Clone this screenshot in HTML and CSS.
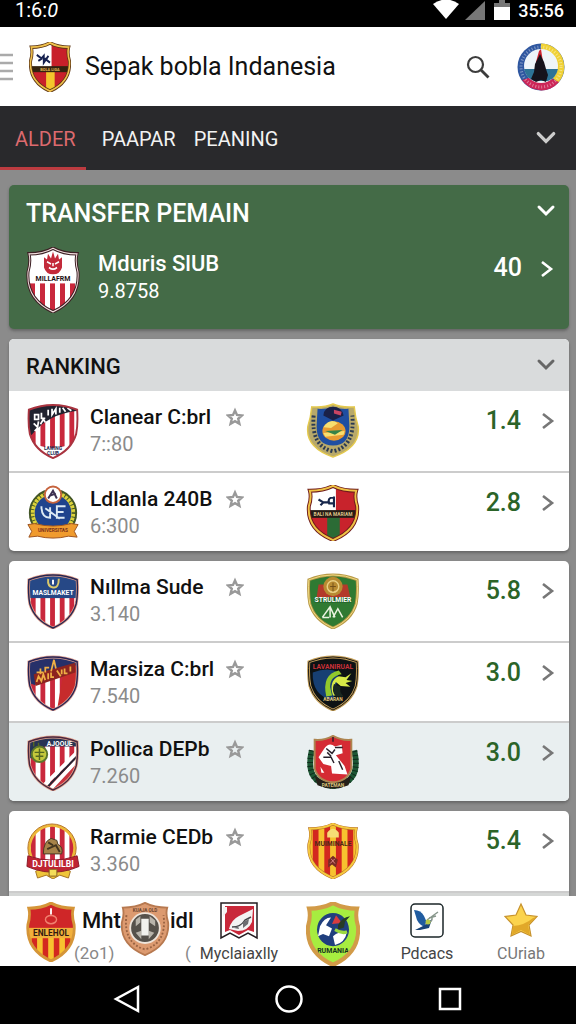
FILE: index.html
```html
<!DOCTYPE html>
<html lang="id">
<head>
    <meta charset="UTF-8">
    <meta name="viewport" content="width=device-width, initial-scale=1.0">
    <title>Sepak bobla Indanesia</title>
    <link rel="stylesheet" href="styles.css">
</head>
<body>

<!-- shapes shared by the crests -->
<svg class="defs" width="0" height="0" aria-hidden="true">
    <defs>
        <path id="shield" d="M3 6Q17 6 27 1Q37 6 51 6Q49 13 52 22Q54 46 27 57Q0 46 2 22Q5 13 3 6Z"/>
        <path id="badge" d="M2 7Q14 2 27 2Q40 2 52 7Q53 22 51 32Q46 49 27 57Q8 49 3 32Q1 22 2 7Z"/>
        <clipPath id="shield-clip"><use href="#shield"/></clipPath>
        <clipPath id="badge-clip"><use href="#badge"/></clipPath>
        <pattern id="red-stripes" width="10" height="60" patternUnits="userSpaceOnUse">
            <rect width="10" height="60" fill="#fff"/>
            <rect x="4" width="5" height="60" fill="#c9283c"/>
        </pattern>
        <pattern id="gold-stripes" width="12" height="60" patternUnits="userSpaceOnUse">
            <rect width="12" height="60" fill="#f7c22f"/>
            <rect x="6" width="6" height="60" fill="#d3281f"/>
        </pattern>
        <symbol id="down" viewBox="0 0 20 14"><path d="M3 3l7 7 7-7" fill="none" stroke="currentColor" stroke-width="3" stroke-linecap="round"/></symbol>
        <symbol id="next" viewBox="0 0 14 20"><path d="M2 3l9 7-9 7" fill="none" stroke="currentColor" stroke-width="2.6"/></symbol>
        <symbol id="star" viewBox="0 0 18 18"><path d="M9 2.500l2 4.500 5 .5-3.800 3.300 1.200 5L9 13.200 4.600 15.800l1.200-5L2 7.500l5-.5z" fill="none" stroke="currentColor" stroke-width="2.4"/></symbol>
    </defs>
</svg>

<div class="status-bar">
    <span class="status-left">1:6:<i>0</i></span>
    <svg width="28" height="20" viewBox="0 0 28 20"><path d="M1 4Q14-5 27 4L14 19Z" fill="#fff"/></svg>
    <svg width="22" height="20" viewBox="0 0 22 20"><path d="M1 20L21 1V20Z" fill="#777"/></svg>
    <svg width="16" height="20" viewBox="0 0 16 20"><path d="M5 0h6v3h5v5H0V3h5z" fill="#777"/><path d="M0 7h16v13H0z" fill="#fff"/></svg>
    <span class="clock">35:56</span>
</div>

<header class="top-bar">
    <button class="menu" aria-label="Menu">
        <svg width="13" height="30" viewBox="0 0 13 30"><path d="M0 3h13M0 11h13M0 19h13M0 27h13" stroke="#aaa" stroke-width="2.5"/></svg>
    </button>
    <svg class="logo" width="42" height="50" viewBox="0 0 54 58" preserveAspectRatio="none" role="img" aria-label="Klub">
        <g clip-path="url(#shield-clip)">
            <rect width="54" height="58" fill="#c8202a"/>
            <rect width="29" height="31" fill="#fff"/>
            <rect x="22" y="34" width="11" height="24" fill="#f4c62c"/>
            <rect y="28" width="54" height="7" fill="#34230f"/>
        </g>
        <path d="M10 15l6 4 3-3v8l6-8M20 19l7 5M12 22l5-3" fill="none" stroke="#16204e" stroke-width="2.4"/>
        <text x="27" y="34" class="crest-text" fill="#e5bd55">BOLA LIGA</text>
        <use href="#shield" fill="none" stroke="#5d3513" stroke-width="4"/>
        <use href="#shield" fill="none" stroke="#f0c24d" stroke-width="2"/>
    </svg>
    <h1>Sepak bobla Indanesia</h1>
    <button class="search" aria-label="Cari">
        <svg width="24" height="24" viewBox="0 0 24 24" fill="none" stroke="#3c3c3c"><circle cx="9.5" cy="9.5" r="7.5" stroke-width="2.2"/><path d="M14.500 14.500l8 8" stroke-width="2.8"/></svg>
    </button>
    <a class="profile" href="#profil" aria-label="Profil">
        <svg width="48" height="50" viewBox="0 0 48 50">
            <circle cx="24" cy="25" r="23.5" fill="#2f57a0"/>
            <path d="M24 1.500A23.500 23.500 0 0 1 41 41L24 25Z" fill="#f0d134"/>
            <path d="M5 38Q24 30 42 40A23 23 0 0 1 5 38Z" fill="#cc2658"/>
            <circle cx="24" cy="25" r="20" fill="none" stroke="#fff" stroke-width="3" stroke-dasharray="1 2" opacity=".4"/>
            <circle cx="24" cy="24" r="17" fill="#eef5f9"/>
            <path d="M7 27h34Q39 36 31 39H17Q9 36 7 27Z" fill="#2d7396"/>
            <path d="M19 20l3-11 2-2 2 13z" fill="#cf2430"/>
            <path d="M18 22l5-10 4 8 2 7 2 6-2 7-5-2-5 2-5-3 3-7z" fill="#15131c"/>
        </svg>
    </a>
</header>

<nav class="tabs">
    <a class="tab active" href="#alder">ALDER</a>
    <a class="tab" href="#paapar">PAAPAR</a>
    <a class="tab" href="#peaning">PEANING</a>
    <button class="more" aria-label="Lainnya"><svg width="22" height="16"><use href="#down"/></svg></button>
</nav>

<main>
    <section class="card transfer">
        <div class="card-head">
            <h2>TRANSFER PEMAIN</h2>
            <button aria-label="Tutup transfer"><svg width="20" height="14"><use href="#down"/></svg></button>
        </div>
        <div class="transfer-row">
            <svg width="54" height="66" viewBox="0 0 54 58" preserveAspectRatio="none">
                <use href="#shield" fill="#fff"/>
                <g clip-path="url(#shield-clip)"><rect y="32" width="54" height="26" fill="url(#red-stripes)"/></g>
                <path d="M18 9l3 2 1-5 3 4 2-6 2 6 3-4 1 5 3-2v9q-2 6-9 6t-9-6z" fill="#c32a3a"/>
                <path d="M21 13l4 2M33 13l-4 2M23 18q4 3 8 0M27 14v3" stroke="#fff" stroke-width="1.5" fill="none"/>
                <text x="27" y="30" class="crest-text big" fill="#1d1216">MILLAFRM</text>
                <use href="#shield" fill="none" stroke="#3c2024" stroke-width="3"/>
                <use href="#shield" fill="none" stroke="#f3dede" stroke-width="1"/>
            </svg>
            <div class="team">
                <h3>Mduris SlUB</h3>
                <p>9.8758</p>
            </div>
            <span class="value">40</span>
            <a class="next" href="#transfer" aria-label="Detail"><svg width="14" height="20"><use href="#next"/></svg></a>
        </div>
    </section>

    <section class="card">
        <div class="card-head ranking-head">
            <h2>RANKING</h2>
            <button aria-label="Tutup ranking"><svg width="20" height="14"><use href="#down"/></svg></button>
        </div>
        <ul>
            <li class="row">
                <svg class="crest" viewBox="0 0 54 58">
                    <g clip-path="url(#badge-clip)">
                        <rect width="54" height="58" fill="url(#red-stripes)"/>
                        <path d="M0 0h54v8Q22 11 5 33L0 36z" fill="#20222f"/>
                        <path d="M12 44q15 5 30 0l2 14H10z" fill="#fff"/>
                    </g>
                    <path d="M8 12h4v5H8zM15 10v6h4M22 7v6M26 6v6l4-6v6M34 5v5M37 5l3 4M42 5l4 3M7 21l4 4 1-6M14 22l3-5 2 3M8 29l3-3" fill="none" stroke="#fff" stroke-width="1.8"/>
                    <text x="27" y="49" class="crest-text" fill="#20284e">LAWING</text>
                    <text x="27" y="54" class="crest-text" fill="#20284e">CLUB</text>
                    <use href="#badge" fill="none" stroke="#a93440" stroke-width="2"/>
                </svg>
                <div class="team"><h3>Clanear C:brl</h3><p>7::80</p></div>
                <button class="star" aria-label="Favorit"><svg width="18" height="20"><use href="#star"/></svg></button>
                <svg class="crest rival" viewBox="0 0 54 58">
                    <path d="M5 4Q18 5 27 1Q36 5 49 4Q50 15 53 24Q56 46 27 56Q-2 46 1 24Q4 15 5 4Z" fill="#b8a96a" stroke="#e4c94d" stroke-width="1.5"/>
                    <path d="M7 13Q4 45 27 50Q50 45 47 13" fill="none" stroke="#2a3a53" stroke-width="4" stroke-dasharray="2 2"/>
                    <path d="M11 6Q18 7 27 4Q36 7 43 6L44 24Q44 44 27 44Q10 44 10 24Z" fill="#1f4ea1"/>
                    <path d="M17 13q1-9 10-9t11 9l-11 5z" fill="#1a2148"/><path d="M28 7l8 2-1 4-7-2z" fill="#ca4563"/>
                    <ellipse cx="28" cy="29" rx="12" ry="10" fill="#e79b32"/>
                    <path d="M17 25q7-10 15-4l-7 5zM17 31l22-2-1 4-19 2z" fill="#f7df70"/><path d="M19 29l18-1-8 5z" fill="#358348"/>
                </svg>
                <span class="value">1.4</span>
                <a class="next" href="#klub1" aria-label="Detail"><svg width="14" height="20"><use href="#next"/></svg></a>
            </li>
            <li class="row">
                <svg class="crest" viewBox="0 0 54 58">
                    <circle cx="27" cy="29" r="24" fill="#ddd33c" stroke="#435627" stroke-width="2"/>
                    <circle cx="27" cy="29" r="22" fill="none" stroke="#435627" stroke-width="5" stroke-dasharray="1 3"/>
                    <circle cx="27" cy="29" r="19" fill="#1f438d"/>
                    <circle cx="27" cy="10" r="8.5" fill="#fff" stroke="#c6633d" stroke-width="2"/>
                    <path d="M22 14l5-8 4 8M24 11l6-2" stroke="#3d3051" stroke-width="2" fill="none"/>
                    <path d="M15 22q0 12 9 12V23M30 22h10M31 28h7M31 23v11h8M19 24l15 11" stroke="#dce9f4" stroke-width="2" fill="none"/>
                    <path d="M1 41l7-1q19 5 38 0l7 1-4 7 3 6-9-1q-16 4-32 0l-9 1 3-6z" fill="#f09b2e" stroke="#9d5422"/>
                    <text x="27" y="49" class="crest-text" fill="#79301b">UNIVERSITAS</text>
                </svg>
                <div class="team"><h3>Ldlanla 240B</h3><p>6:300</p></div>
                <button class="star" aria-label="Favorit"><svg width="18" height="20"><use href="#star"/></svg></button>
                <svg class="crest rival" viewBox="0 0 54 58">
                    <g clip-path="url(#shield-clip)">
                        <rect width="54" height="58" fill="#c8232c"/><rect width="30" height="27" fill="#fff"/>
                        <rect x="21" y="32" width="13" height="26" fill="#2b6b35"/><rect y="26" width="54" height="8" fill="#251c16"/>
                    </g>
                    <path d="M12 15l5 3-3 3M17 18h6M28 12v11M27 13q-6 0-4 6h6" fill="none" stroke="#17264b" stroke-width="2.2"/>
                    <text x="27" y="32" class="crest-text" fill="#dfc489">BALI NA MARIAM</text>
                    <use href="#shield" fill="none" stroke="#701c1c" stroke-width="4"/><use href="#shield" fill="none" stroke="#efc244" stroke-width="2"/>
                </svg>
                <span class="value">2.8</span>
                <a class="next" href="#klub2" aria-label="Detail"><svg width="14" height="20"><use href="#next"/></svg></a>
            </li>
        </ul>
    </section>

    <section class="card">
        <ul>
            <li class="row">
                <svg class="crest" viewBox="0 0 54 58">
                    <g clip-path="url(#badge-clip)"><rect width="54" height="58" fill="url(#red-stripes)"/><rect width="54" height="26" fill="#264886"/></g>
                    <path d="M22 6q-1 8 5 9t6-9" fill="none" stroke="#d9c86b" stroke-width="2"/><path d="M27 7v5" stroke="#fff" stroke-width="2"/>
                    <text x="27" y="23" class="crest-text big" fill="#fff">MASLMAKET</text>
                    <use href="#badge" fill="none" stroke="#e2a08c" stroke-width="3"/><use href="#badge" fill="none" stroke="#252652" stroke-width="1.5"/>
                </svg>
                <div class="team"><h3>Nıllma Sude</h3><p>3.140</p></div>
                <button class="star" aria-label="Favorit"><svg width="18" height="20"><use href="#star"/></svg></button>
                <svg class="crest rival" viewBox="0 0 54 58">
                    <use href="#badge" fill="#2f7a32"/>
                    <path d="M12 12h30l3 14H10z" fill="#b33a2a"/>
                    <circle cx="27" cy="14" r="10" fill="#b88b32"/><circle cx="27" cy="14" r="6" fill="none" stroke="#ead083" stroke-width="1.5"/><path d="M24 14h6M27 10v9" stroke="#725019"/>
                    <rect x="8" y="25" width="38" height="6" fill="#276a2d"/>
                    <text x="27" y="30" class="crest-text big" fill="#fff">STRULMIER</text>
                    <path d="M16 46l8-11 5 11M16 46h7M27 46l5-9 5 9M24 36v10" fill="none" stroke="#e9f2df" stroke-width="1.6"/>
                    <use href="#badge" fill="none" stroke="#b99947" stroke-width="3"/><use href="#badge" fill="none" stroke="#f0df86" stroke-width="1"/>
                </svg>
                <span class="value">5.8</span>
                <a class="next" href="#klub3" aria-label="Detail"><svg width="14" height="20"><use href="#next"/></svg></a>
            </li>
            <li class="row">
                <svg class="crest" viewBox="0 0 54 58">
                    <g clip-path="url(#badge-clip)">
                        <rect width="54" height="58" fill="url(#red-stripes)"/><path d="M39 10h15v48H31z" fill="#c72b2c"/>
                        <path d="M0 0h54v9L8 31 0 28z" fill="#263069"/><path d="M7 20L50 8v10L9 32z" fill="#8c241f"/>
                    </g>
                    <path d="M10 18h7M14 14v6M19 18v-5h4M25 17l3-12 2 9M10 28l2-6 3 5 2-7 2 6M22 19v6M25 18v5h3M31 16l4 6M36 15v5M39 14v5h3M45 12v5" fill="none" stroke="#efaf45" stroke-width="1.8"/>
                    <use href="#badge" fill="none" stroke="#dba194" stroke-width="3"/><use href="#badge" fill="none" stroke="#272353" stroke-width="1.5"/>
                </svg>
                <div class="team"><h3>Marsiza C:brl</h3><p>7.540</p></div>
                <button class="star" aria-label="Favorit"><svg width="18" height="20"><use href="#star"/></svg></button>
                <svg class="crest rival" viewBox="0 0 54 58">
                    <use href="#badge" fill="#0d1214"/>
                    <path d="M6 18q16-6 27 0l-6 29Q5 42 6 18z" fill="#173f73"/>
                    <text x="27" y="14" class="crest-text big" fill="#c93139">LAVANIRUAL</text>
                    <path d="M20 43Q15 20 33 16l3 4q-12 2-12 13l2 9z" fill="#91c82c"/>
                    <path d="M27 42q-5-15 6-20l7 1 6-4-5 7 6 1-7 2 5 4-10-1-5-4q-4 5 0 14z" fill="#d7ea47"/>
                    <path d="M28 30q-3 7 2 13h8q-5-5-3-10z" fill="#192821"/>
                    <text x="27" y="48" class="crest-text" fill="#e3c779">ABARAN</text>
                    <use href="#badge" fill="none" stroke="#c39e58" stroke-width="3"/><use href="#badge" fill="none" stroke="#151414" stroke-width="1"/>
                </svg>
                <span class="value">3.0</span>
                <a class="next" href="#klub4" aria-label="Detail"><svg width="14" height="20"><use href="#next"/></svg></a>
            </li>
            <li class="row selected">
                <svg class="crest" viewBox="0 0 54 58">
                    <g clip-path="url(#badge-clip)">
                        <rect width="54" height="58" fill="url(#red-stripes)"/><path d="M0 0h54v12H18v12H0z" fill="#273455"/>
                        <path d="M52 22L20 54l7 4 27-8z" fill="#c83440"/><path d="M52 18L18 52M54 24L25 55" stroke="#fff" stroke-width="4"/><path d="M53 21L21 54" stroke="#252433" stroke-width="2"/>
                    </g>
                    <circle cx="13" cy="20" r="8" fill="#c4c83b" stroke="#5b762b" stroke-width="2"/><path d="M8 18h10M9 22h8M13 14v12M7 7v5M12 8v4" stroke="#556722" stroke-width="1.5"/>
                    <text x="34" y="11" class="crest-text big" fill="#fff">AJOOUE</text>
                    <use href="#badge" fill="none" stroke="#e2a38e" stroke-width="3"/><use href="#badge" fill="none" stroke="#49273f" stroke-width="1.5"/>
                </svg>
                <div class="team"><h3>Pollica DEPb</h3><p>7.260</p></div>
                <button class="star" aria-label="Favorit"><svg width="18" height="20"><use href="#star"/></svg></button>
                <svg class="crest rival" viewBox="0 0 54 58">
                    <path d="M5 16Q-3 50 27 53Q57 50 49 16" fill="none" stroke="#1d5734" stroke-width="6"/>
                    <path d="M5 16Q-3 50 27 53Q57 50 49 16" fill="none" stroke="#0f2d1c" stroke-width="6" stroke-dasharray="1 3"/>
                    <path d="M8 42Q25 56 46 42L43 52Q27 59 11 52z" fill="#252019"/>
                    <path d="M8 5Q18 6 27 1Q36 6 46 5V35Q42 48 27 49Q12 48 8 35Z" fill="#d52b34" stroke="#ad8550" stroke-width="2"/>
                    <path d="M18 14q5-7 11-2l7-2 1 9-7 2 9 11 3 9-16-1-1-8-8-2-5-7z" fill="#fff"/>
                    <path d="M20 14l6 5 3-4M17 23h8l3 6M27 2v5M29 13h8M33 27l4 9M21 18l4 4" fill="none" stroke="#29212a" stroke-width="1.5"/><path d="M14 33l4 6h-3z" fill="#fff"/>
                    <text x="27" y="54" class="crest-text" fill="#d8c27d">PATEMAN</text>
                </svg>
                <span class="value">3.0</span>
                <a class="next" href="#klub5" aria-label="Detail"><svg width="14" height="20"><use href="#next"/></svg></a>
            </li>
        </ul>
    </section>

    <section class="card">
        <ul>
            <li class="row">
                <svg class="crest" viewBox="0 0 54 58">
                    <clipPath id="round"><circle cx="26" cy="26" r="22"/></clipPath>
                    <circle cx="26" cy="26" r="25" fill="#edb93a" stroke="#b4752a"/>
                    <rect width="54" height="50" fill="url(#red-stripes)" clip-path="url(#round)"/>
                    <path d="M17 32q0-13 8-16l6 2 1 4q6 3 4 10z" fill="#a78349" stroke="#493923"/><path d="M21 27l9-4 4 7M22 20l5 3" stroke="#43351f" stroke-width="2" fill="none"/>
                    <path d="M9 50l6-3h24l6 3-2 7-9-3-7 4-7-4-9 3z" fill="#efc53a" stroke="#a37225"/>
                    <path d="M1 34q25 9 51 0l2 11-8 3q-19 6-38 0l-8-3z" fill="#bf2432" stroke="#8a1a28"/>
                    <text x="27" y="46" class="crest-text large" fill="#fff">DJTULILBI</text>
                    <path d="M23 48h8v7h-8z" fill="#f4dc58" stroke="#896021"/>
                </svg>
                <div class="team"><h3>Rarmie CEDb</h3><p>3.360</p></div>
                <button class="star" aria-label="Favorit"><svg width="18" height="20"><use href="#star"/></svg></button>
                <svg class="crest rival" viewBox="0 0 54 58">
                    <rect width="54" height="58" fill="url(#gold-stripes)" clip-path="url(#shield-clip)"/>
                    <path d="M21 10q6-8 12 0v5H21z" fill="#f6dc75"/>
                    <text x="27" y="24" class="crest-text big" fill="#4f2816">MUIMINALE</text>
                    <path d="M22 38l5-4 5 4-2 8-4-3-4 3z" fill="#792a25"/><path d="M25 37l4 5M29 37l-5 5" stroke="#d88"/>
                    <use href="#shield" fill="none" stroke="#b36b28" stroke-width="3"/><use href="#shield" fill="none" stroke="#f6c93f" stroke-width="2"/>
                </svg>
                <span class="value">5.4</span>
                <a class="next" href="#klub6" aria-label="Detail"><svg width="14" height="20"><use href="#next"/></svg></a>
            </li>
            <li class="row dim"></li>
        </ul>
    </section>
</main>

<nav class="bottom-nav">
    <div class="under-text">
        <b>Mht</b><b class="under-end">idl</b>
        <span>(2o1)</span><span class="under-end">(</span>
    </div>
    <a href="#liga" aria-label="Liga">
        <svg class="nav-crest" viewBox="0 0 54 58" preserveAspectRatio="none">
            <g clip-path="url(#shield-clip)"><rect width="54" height="58" fill="url(#gold-stripes)"/><rect width="54" height="26" fill="#cf2628"/><rect y="25" width="54" height="10" fill="#f2b03b"/></g>
            <ellipse cx="27" cy="17" rx="6" ry="4" fill="none" stroke="#f08170" stroke-width="1.5"/><path d="M27 6v6" stroke="#fff" stroke-width="2"/>
            <text x="27" y="33" class="crest-text large" fill="#321b12">ENLEHOL</text>
            <use href="#shield" fill="none" stroke="#d59538" stroke-width="3"/>
        </svg>
    </a>
    <a href="#piala" aria-label="Piala">
        <svg class="nav-crest piala" viewBox="0 0 54 58" preserveAspectRatio="none">
            <use href="#shield" fill="#dc9a70" stroke="#b77950" stroke-width="2"/>
            <path d="M7 14Q3 44 27 51Q51 44 47 14" fill="none" stroke="#996343" stroke-width="2" stroke-dasharray="2 2"/>
            <text x="27" y="11" class="crest-text" fill="#6e4731">KUAJA OLD</text>
            <circle cx="27" cy="28" r="16" fill="#55514b" stroke="#eee4da" stroke-width="2"/>
            <path d="M17 19l5-4v7l-5 4zM32 15l6 5v6l-6-4zM17 33l6-2v9zM37 33l-6-2v9z" fill="#b8b4ab"/><path d="M23 18h8v18h-8z" fill="#f1f1ed"/>
        </svg>
    </a>
    <a href="#mycl">
        <svg class="nav-icon" viewBox="0 0 38 38">
            <path d="M1 1h36v35l-9-5-9 5-9-5-9 5z" fill="#fff" stroke="#241c20" stroke-width="1.5"/><path d="M5 4h29v26l-6-2-9 5-9-5-5 2z" fill="#c9283a"/>
            <path d="M3 5h4v5l-4 5zM9 27q2-9 10-13l14-7-1 13q-4 9-14 9z" fill="#f3f3f3"/><path d="M12 25q9 0 13-7l6-3" fill="none" stroke="#45464a" stroke-width="1.5"/><path d="M23 20l6-3-1 5-5 4zM14 26l4-2 1 3z" fill="#6c6d70"/>
        </svg>
        <span>Myclaiaxlly</span>
    </a>
    <a href="#klub" aria-label="Klub">
        <svg class="nav-crest wide" viewBox="0 0 54 58" preserveAspectRatio="none">
            <use href="#shield" fill="#a7ed40"/>
            <ellipse cx="27" cy="25" rx="16" ry="15" fill="#203f7e"/>
            <path d="M14 22q4-8 11-8l-5 7 6 3-3 7-6-2-5 2M27 31q7-5 14-4-2 10-12 12z" fill="#fff"/><path d="M26 20l4-8 6 7z" fill="#d83c3f"/>
            <path d="M32 21q4-7 12-8l-5 5-1 5-6 2z" fill="#263b26"/><path d="M29 25q7 4 12 2" stroke="#9bd940" stroke-width="3" fill="none"/>
            <text x="27" y="46" class="crest-text big" fill="#17331e">RUMANIA</text>
            <use href="#shield" fill="none" stroke="#d29b48" stroke-width="4"/>
        </svg>
    </a>
    <a href="#pdcacs">
        <svg class="nav-icon" viewBox="0 0 38 38">
            <rect x="3" y="2" width="32" height="33" rx="4" fill="#fff" stroke="#1b2628" stroke-width="1.5"/>
            <path d="M6 8q7 0 10 6l5 11q-8 1-12-7z" fill="#205ca0"/><path d="M7 28l10-5 7-6-3 9-9 2z" fill="#184478"/>
            <path d="M19 18l11-8M21 16l7-2M17 22q8-2 7-6" fill="none" stroke="#87968b" stroke-width="1.5"/><circle cx="20" cy="20" r="2.5" fill="#b5ca45"/>
        </svg>
        <span>Pdcacs</span>
    </a>
    <a class="faded" href="#curiab">
        <svg class="nav-icon" viewBox="0 0 38 38">
            <path d="M19 2l5 11 11 1.500-8 8.500 2 11L19 29.500 9 34 11 23 3 14.500 14 13z" fill="#fbd34d" stroke="#c7922d" stroke-width="1.2"/>
            <path d="M11 24q12-1 20-8l3-1-8 8 2 10-9-5-9 5z" fill="#e1a829"/>
        </svg>
        <span>CUriab</span>
    </a>
</nav>

<div class="system-nav">
    <button aria-label="Kembali"><svg width="28" height="30" viewBox="0 0 28 30"><path d="M25 3v24L3 15z"/></svg></button>
    <button aria-label="Beranda"><svg width="30" height="30" viewBox="0 0 30 30"><circle cx="15" cy="15" r="12.5"/></svg></button>
    <button aria-label="Aplikasi"><svg width="26" height="30" viewBox="0 0 26 30"><path d="M3 5h20v20H3z"/></svg></button>
</div>

</body>
</html>
```

FILE: styles.css
```css
*{
    box-sizing:border-box;
}
body
{
    margin:0;
    height:100vh;
    display:flex;
    flex-direction:column;
    background-color:#000;
    color:#111;
    font-family:Roboto, "Liberation Sans", sans-serif;
    overflow:hidden;
}
h1,h2,h3,p,ul
{
    margin:0;
    padding:0;
    font-weight:500;
}
ul
{
    list-style:none;
}
button
{
    border:0;
    padding:0;
    background:transparent;
    color:inherit;
    cursor:pointer;
}
a
{
    color:inherit;
    text-decoration:none;
}
svg
{
    display:block;
}
.defs
{
    position:absolute;
}
.status-bar
{
    flex:none;
    display:flex;
    gap:4px;
    height:27px;
    padding:0 12px 0 15px;
    color:#fff;
    font-size:20px;
    line-height:20px;
}
.status-left
{
    margin-right:auto;
}
.status-bar svg:nth-of-type(3)
{
    margin-left:4px;
}
.clock
{
    margin-left:4px;
    font-size:18px;
    font-weight:500;
    line-height:22px;
}
.top-bar
{
    flex:none;
    display:flex;
    align-items:center;
    height:79px;
    padding-right:11px;
    background-color:#fff;
}
.logo
{
    margin-left:16px;
}
h1
{
    margin-left:14px;
    font-size:25px;
    font-weight:400;
}
.search
{
    margin-left:auto;
    margin-right:27px;
}
.tabs
{
    flex:none;
    display:flex;
    align-items:center;
    height:64px;
    padding-right:19px;
    background-color:#29292c;
    color:#f2f2f2;
    font-size:20px;
}
.tab
{
    height:64px;
    line-height:66px;
    padding:0 9px;
}
.tab.active
{
    margin-right:7px;
    padding:0 10px 0 15px;
    color:#dc6a6e;
    border-bottom:3px solid #bc3b40;
}
.more
{
    margin-left:auto;
    color:#ccc;
}
main
{
    flex:1;
    min-height:0;
    overflow:hidden;
    display:flex;
    flex-direction:column;
    gap:10px;
    padding:15px 7px 0 9px;
    background-color:#8b8b8b;
}
.card
{
    flex:none;
    overflow:hidden;
    border-radius:5px;
    background-color:#fff;
    box-shadow:0 2px 3px #666;
}
.card-head
{
    display:flex;
    justify-content:space-between;
    align-items:center;
    height:52px;
    padding:0 13px 0 17px;
}
h2
{
    padding-top:4px;
    font-size:25px;
}
.ranking-head
{
    background-color:#d9dbdc;
}
.ranking-head h2
{
    padding-top:2px;
    font-size:22px;
}
.ranking-head button
{
    color:#666;
}
.transfer
{
    height:144px;
    background-color:#446b47;
    color:#fff;
}
.transfer-row
{
    display:flex;
    padding:10px 15px 0 17px;
}
.transfer-row .team
{
    margin-left:18px;
    margin-right:auto;
    padding-top:3px;
}
.transfer-row h3
{
    font-size:22px;
}
.transfer-row .team p
{
    color:#fff;
}
h3
{
    font-size:21px;
    line-height:28px;
    white-space:nowrap;
}
.team p
{
    color:#8b8b8b;
    font-size:20px;
    font-weight:400;
    line-height:26px;
}
.row
{
    display:grid;
    grid-template-columns:54px 126px 18px 5fr 54px 19fr 14px;
    column-gap:10px;
    align-items:start;
    height:80px;
    padding:12px 14px 0 17px;
}
.row + .row
{
    border-top:2px solid #ccc;
}
.row.selected
{
    background-color:#e9eff0;
}
.row.dim
{
    background-color:#d5d7d6;
}
.crest
{
    width:54px;
    height:56px;
}
.rival
{
    grid-column:5;
}
.star
{
    height:28px;
    color:#999;
}
.value
{
    padding-right:10px;
    color:#2b6428;
    font-size:25px;
    font-weight:500;
    line-height:36px;
    text-align:right;
}
.next
{
    height:36px;
    padding-top:8px;
    color:#777;
}
.transfer-row .value
{
    margin-right:18px;
    padding:3px 0 0;
    color:#fff;
}
.transfer-row .next
{
    padding-top:12px;
    color:#fff;
}
.crest-text
{
    font-size:5px;
    font-weight:700;
    text-anchor:middle;
}
.crest-text.big
{
    font-size:7px;
}
.crest-text.large
{
    font-size:9px;
}
.bottom-nav
{
    flex:none;
    position:relative;
    display:grid;
    grid-template-columns:repeat(6, 1fr);
    height:70px;
    padding:0 8px 0 4px;
    background-color:#fff;
    color:#444;
    font-size:16px;
}
.bottom-nav a
{
    position:relative;
    display:flex;
    flex-direction:column;
    align-items:center;
    padding-top:6px;
}
.bottom-nav .faded
{
    color:#777;
}
.nav-icon
{
    width:38px;
    height:38px;
}
.nav-icon + span
{
    line-height:28px;
}
.nav-crest
{
    width:50px;
    height:60px;
}
.nav-crest.piala
{
    height:54px;
}
.nav-crest.wide
{
    width:54px;
    height:64px;
}
.under-text
{
    position:absolute;
    left:74px;
    top:8px;
    display:grid;
    grid-template-columns:86px auto;
    column-gap:10px;
    line-height:33px;
    color:#888;
    font-size:17px;
}
.under-text b
{
    padding-left:8px;
    color:#111;
    font-size:22px;
    font-weight:500;
}
.under-text b.under-end
{
    padding:0;
}
.under-text span.under-end
{
    padding-left:15px;
}
.system-nav
{
    flex:none;
    display:flex;
    justify-content:space-around;
    align-items:center;
    height:58px;
    padding:7px 46px 0;
}
.system-nav svg
{
    fill:none;
    stroke:#fff;
    stroke-width:2.5;
}
```
